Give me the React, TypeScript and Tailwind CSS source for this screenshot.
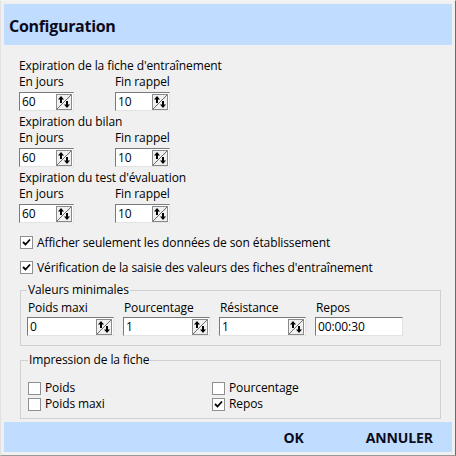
import React from "react";

const font = { fontFamily: '"Open Sans", "Noto Sans", sans-serif' };

function SpinIcon() {
  return (
    <svg width="16" height="16" viewBox="0 0 16 16" className="shrink-0">
      <rect x="0.5" y="0.5" width="15" height="15" fill="#f0f0f0" stroke="#8a8a8a" />
      <line x1="1" y1="15" x2="15" y2="1" stroke="#6a6a6a" strokeWidth="1" />
      <path d="M5 2 L2 5.5 H4 V9 H6 V5.5 H8 Z" fill="#000" />
      <path d="M11 14 L8 10.5 H10 V7 H12 V10.5 H14 Z" fill="#000" />
    </svg>
  );
}

function Spinner({ value, w }: { value: string; w: string }) {
  return (
    <div className={`flex items-center h-[19px] ${w} bg-white border border-t-[#7a7a7a] border-l-[#7a7a7a] border-r-[#e3e3e3] border-b-[#e3e3e3]`}>
      <span className="flex-1 pl-[2px] text-[12px] text-black leading-none">{value}</span>
      <div className="pr-[1px] flex items-center">
        <SpinIcon />
      </div>
    </div>
  );
}

function Check({ checked }: { checked?: boolean }) {
  return (
    <div className="w-[13px] h-[13px] bg-white border border-[#8e8f8f] flex items-center justify-center shrink-0">
      {checked && (
        <svg width="9" height="9" viewBox="0 0 9 9">
          <path d="M1 4 L3.5 6.5 L8 1.5" fill="none" stroke="#000" strokeWidth="1.8" />
        </svg>
      )}
    </div>
  );
}

function Section({ title }: { title: string }) {
  return (
    <div className="flex flex-col">
      <div className="h-[16px] leading-[16px]">{title}</div>
      <div className="flex h-[16px] leading-[16px]">
        <div className="w-[96px]">En jours</div>
        <div>Fin rappel</div>
      </div>
      <div className="flex mt-[2px] mb-[3px]">
        <div className="w-[96px]">
          <Spinner value="60" w="w-[55px]" />
        </div>
        <Spinner value="10" w="w-[55px]" />
      </div>
    </div>
  );
}

export default function App() {
  return (
    <div
      className="w-[456px] h-[456px] bg-[#f0f0f0] border border-t-[#f4f4f4] border-l-[#e2e2e2] border-r-[#6b6b6b] border-b-[#9a9a9a] p-[3px] flex flex-col text-[12px] text-black tracking-[-0.1px]"
      style={font}
    >
      <div className="h-[41px] bg-[#c0dcfe] flex items-center pl-[5px] pt-[2px]">
        <span className="text-[16px] font-bold text-[#0b0b1c] tracking-[-0.3px]">Configuration</span>
      </div>
      <div className="flex-1 flex flex-col pl-[15px] pr-[11px] pt-[13px]">
        <Section title="Expiration de la fiche d'entraînement" />
        <Section title="Expiration du bilan" />
        <Section title="Expiration du test d'évaluation" />
        <div className="flex flex-col mt-[4px] mb-[2px]">
          <div className="flex items-center h-[25px] pl-[1px] gap-[4px]">
            <Check checked />
            <span>Afficher seulement les données de son établissement</span>
          </div>
          <div className="flex items-center h-[25px] pl-[1px] gap-[4px]">
            <Check checked />
            <span>Vérification de la saisie des valeurs des fiches d'entraînement</span>
          </div>
        </div>
        <fieldset className="border border-[#d0d0d0] ml-[1px] px-[6px] pb-[9px]">
          <legend className="px-[1px] leading-[16px]">Valeurs minimales</legend>
          <div className="flex gap-[9px] mt-[2px]">
            {[
              ["Poids maxi", "0"],
              ["Pourcentage", "1"],
              ["Résistance", "1"],
            ].map(([l, v]) => (
              <div key={l} className="flex flex-col w-[87px]">
                <div className="h-[16px] leading-[16px] pl-[1px]">{l}</div>
                <div className="mt-[1px]">
                  <Spinner value={v} w="w-[87px]" />
                </div>
              </div>
            ))}
            <div className="flex flex-col w-[88px]">
              <div className="h-[16px] leading-[16px] pl-[1px]">Repos</div>
              <div className="mt-[1px] h-[19px] bg-white border border-t-[#7a7a7a] border-l-[#7a7a7a] border-r-[#e3e3e3] border-b-[#e3e3e3] flex items-center pl-[2px]">
                00:00:30
              </div>
            </div>
          </div>
        </fieldset>
        <fieldset className="border border-[#d0d0d0] ml-[1px] px-[7px] pb-[6px] mt-[6px]">
          <legend className="px-[1px] leading-[16px]">Impression de la fiche</legend>
          <div className="grid grid-cols-[184px_1fr] mt-[12px]">
            <div className="flex items-center h-[16px] gap-[4px]">
              <Check />
              <span>Poids</span>
            </div>
            <div className="flex items-center h-[16px] gap-[4px]">
              <Check />
              <span>Pourcentage</span>
            </div>
            <div className="flex items-center h-[16px] gap-[4px]">
              <Check />
              <span>Poids maxi</span>
            </div>
            <div className="flex items-center h-[16px] gap-[4px]">
              <Check checked />
              <span>Repos</span>
            </div>
          </div>
        </fieldset>
      </div>
      <div className="h-[30px] bg-[#c0dcfe] flex items-center justify-end text-[14px] font-bold text-[#0b0b1c]">
        <span className="mr-[62px]">OK</span>
        <span className="mr-[19px]">ANNULER</span>
      </div>
    </div>
  );
}
